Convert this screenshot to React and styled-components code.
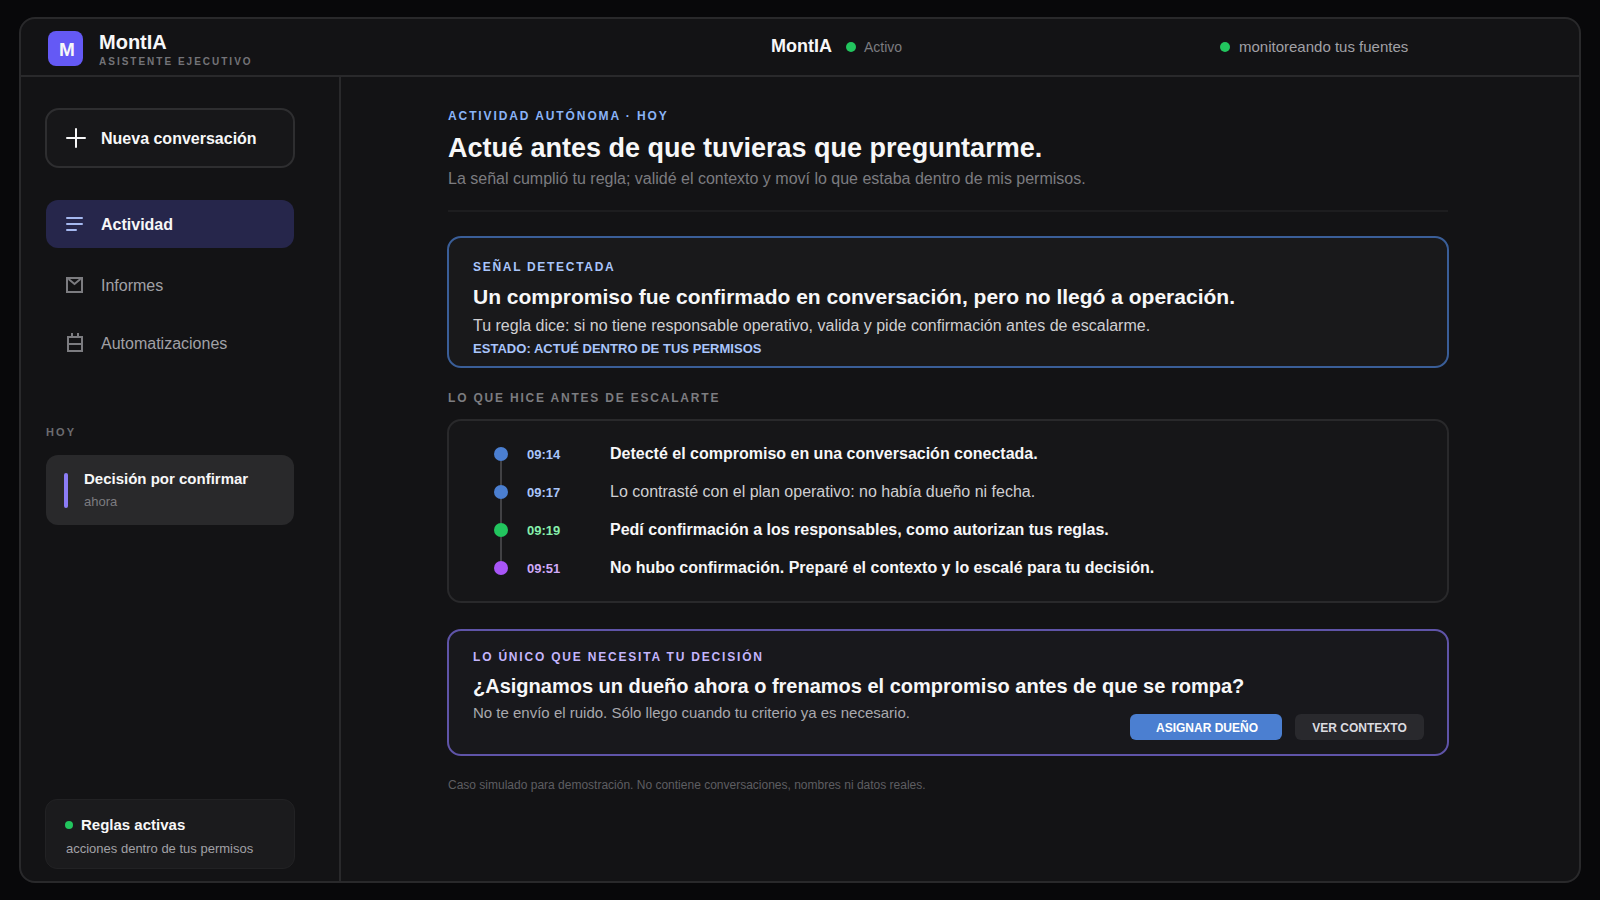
import React from 'react'
import styled, { createGlobalStyle, css } from 'styled-components'

const GlobalStyle = createGlobalStyle`
  * {
    box-sizing: border-box;
  }

  body {
    margin: 0;
    background: #08080a;
    font-family: 'Liberation Sans', Arial, sans-serif;
    color: #f7f7f8;
  }
`

const Page = styled.div`
  width: 1600px;
  height: 900px;
  padding: 17px 19px;
  overflow: hidden;
`

const Window = styled.div`
  display: flex;
  flex-direction: column;
  height: 866px;
  background: #131315;
  border: 2px solid #29292b;
  border-radius: 16px;
`

const Header = styled.header`
  display: grid;
  grid-template-columns: 722px 450px 1fr;
  height: 58px;
  padding-left: 27px;
  border-bottom: 2px solid #29292b;
`

const Brand = styled.div`
  display: flex;
  gap: 16px;
  padding-top: 12px;
`

const Logo = styled.div`
  width: 35px;
  height: 35px;
  padding-left: 3px;
  border-radius: 8px;
  background: #6459f5;
  font-size: 19px;
  font-weight: bold;
  line-height: 37px;
  text-align: center;
`

const BrandName = styled.div`
  font-size: 20px;
  font-weight: bold;
  line-height: 22px;
`

const BrandTagline = styled.div`
  margin-top: 3px;
  color: #737378;
  font-size: 10px;
  font-weight: bold;
  letter-spacing: 2px;
  line-height: 12px;
`

const HeaderStatus = styled.div`
  display: flex;
  align-items: center;
  height: 56px;
  color: ${({ $color }) => $color};
  font-size: ${({ $size }) => $size}px;
  line-height: 18px;
`

const HeaderTitle = styled.span`
  margin: 0 14px 0 1px;
  padding-bottom: 2px;
  color: #f7f7f8;
  font-size: 18px;
  font-weight: bold;
`

const Dot = styled.span`
  flex: none;
  width: ${({ $size }) => $size}px;
  height: ${({ $size }) => $size}px;
  margin-right: ${({ $gap }) => $gap || 0}px;
  border-radius: 50%;
  background: ${({ $color }) => $color || '#22c55e'};
`

const Body = styled.div`
  display: flex;
  flex: 1;
`

const Sidebar = styled.aside`
  display: flex;
  flex-direction: column;
  width: 320px;
  padding: 31px 23px 12px 24px;
  border-right: 2px solid #29292b;
`

const NewButton = styled.button`
  display: flex;
  align-items: center;
  width: 250px;
  height: 60px;
  margin-bottom: 32px;
  padding: 0 0 0 19px;
  gap: 15px;
  border: 2px solid #2e2e30;
  border-radius: 14px;
  background: #171719;
  color: #f7f7f8;
  font: bold 16px 'Liberation Sans', Arial, sans-serif;
`

const ItemText = styled.span`
  padding-top: 2px;
`

const NavItem = styled.div`
  display: flex;
  align-items: center;
  gap: 17px;
  width: 248px;
  height: 58px;
  margin-left: 1px;
  padding-left: 18px;
  color: #a1a1a6;
  font-size: 16px;

  ${({ $active }) => $active && css`
    height: 48px;
    margin-bottom: 8px;
    border-radius: 12px;
    background: #26264b;
    color: #f7f7f8;
    font-weight: bold;
  `}
`

const SidebarLabel = styled.div`
  margin: 53px 0 16px 1px;
  color: #6c6c70;
  font-size: 11px;
  font-weight: bold;
  letter-spacing: 2.1px;
  line-height: 14px;
`

const ConversationCard = styled.div`
  display: flex;
  gap: 16px;
  width: 248px;
  height: 70px;
  margin-left: 1px;
  padding: 14px 18px;
  border-radius: 12px;
  background: #29292b;
`

const Accent = styled.div`
  width: 4px;
  height: 35px;
  margin-top: 4px;
  border-radius: 2px;
  background: #8b7cf6;
`

const CardName = styled.div`
  display: flex;
  align-items: center;
  font-size: 15px;
  font-weight: bold;
  line-height: 20px;
`

const CardNote = styled.div`
  margin-top: ${({ $gap }) => $gap}px;
  padding-left: ${({ $indent }) => $indent || 0}px;
  color: ${({ $color }) => $color};
  font-size: 13px;
  line-height: 16px;
`

const RulesCard = styled.div`
  width: 250px;
  height: 70px;
  margin-top: auto;
  padding: 15px 18px 0 19px;
  border: 1px solid #222224;
  border-radius: 12px;
  background: #1b1b1d;
`

const Main = styled.main`
  width: 1108px;
  padding: 31px 0 0 106px;
`

const Label = styled.div`
  color: ${({ $color }) => $color};
  font-size: 12px;
  font-weight: bold;
  letter-spacing: ${({ $spacing }) => $spacing || 1.8}px;
  line-height: 16px;
`

const Intro = styled.section`
  margin: 0 1px;
  height: 104px;
  border-bottom: 2px solid #1d1d1f;
`

const Title = styled.h1`
  margin: 8px 0 5px;
  font-size: 27px;
  line-height: 32px;
`

const Text = styled.p`
  margin: 0;
  color: ${({ $color }) => $color};
  font-size: ${({ $size }) => $size || 16}px;
  line-height: ${({ $line }) => $line || 20}px;
`

const Panel = styled.section`
  height: ${({ $height }) => $height}px;
  margin-top: ${({ $top }) => $top}px;
  padding: ${({ $padding }) => $padding};
  border: 2px solid ${({ $border }) => $border};
  border-radius: 14px;
  background: ${({ $background }) => $background};
`

const PanelTitle = styled.h2`
  margin: ${({ $margin }) => $margin};
  font-size: ${({ $size }) => $size}px;
  line-height: ${({ $line }) => $line}px;
`

const State = styled.div`
  margin-top: 5px;
  color: #a9c5fb;
  font-size: 13px;
  font-weight: bold;
  letter-spacing: 0.03px;
  line-height: 16px;
`

const SectionLabel = styled.div`
  margin: 22px 1px -9px;
`

const Step = styled.div`
  display: grid;
  grid-template-columns: 14px 83px 1fr;
  align-items: center;
  height: 38px;
`

// the connector fills the row above each dot except the first
const Marker = styled.div`
  display: flex;
  flex-direction: column;
  align-items: center;
  height: 38px;
  margin-top: -12px;
  margin-bottom: 12px;
  justify-content: flex-end;

  &::before {
    content: '';
    width: 2px;
    height: 24px;
    background: ${({ $first }) => ($first ? 'transparent' : '#414144')};
  }
`

const StepTime = styled.span`
  padding: 2px 0 0 19px;
  color: ${({ $color }) => $color};
  font-size: 13px;
  font-weight: bold;
  line-height: 16px;
`

const StepText = styled.span`
  padding-left: 19px;
  color: ${({ $strong }) => ($strong ? '#f7f7f8' : '#cfcfd2')};
  font-size: 16px;
  font-weight: ${({ $strong }) => ($strong ? 'bold' : 'normal')};
  line-height: 20px;
`

const DecisionRow = styled.div`
  display: flex;
  justify-content: space-between;
  align-items: flex-start;
`

const Actions = styled.div`
  display: flex;
  gap: 13px;
  margin-top: 10px;
`

const ActionButton = styled.button`
  width: ${({ $width }) => $width}px;
  height: 26px;
  padding: 1px 0 0 ${({ $primary }) => ($primary ? 2 : 0)}px;
  border: 0;
  border-radius: 6px;
  background: ${({ $primary }) => ($primary ? '#4b7fd1' : '#29292d')};
  color: ${({ $primary }) => ($primary ? '#fff' : '#dcdce0')};
  font: bold 12px 'Liberation Sans', Arial, sans-serif;
`

const Disclaimer = styled.p`
  margin: 21px 1px 0;
  color: #5e5e62;
  font-size: 12px;
  line-height: 16px;
`

const PlusIcon = () => (
  <svg width="20" height="20" viewBox="0 0 20 20" stroke="#f7f7f8" strokeWidth="2" strokeLinecap="round">
    <path d="M1 10H19M10 1V19" />
  </svg>
)

const ActivityIcon = () => (
  <svg width="20" height="20" viewBox="0 0 20 20" stroke="#a5b8f0" strokeWidth="2" strokeLinecap="round">
    <path d="M3 4H18M3 10H18M3 16H12" />
  </svg>
)

const ReportsIcon = () => (
  <svg width="20" height="20" viewBox="0 0 20 20" fill="none" stroke="#7c7c80" strokeWidth="2">
    <path d="M3 3H18V17H3ZM4.500 4L10.500 9L16.500 4" />
  </svg>
)

const AutomationsIcon = () => (
  <svg width="20" height="20" viewBox="0 0 20 20" fill="none" stroke="#7c7c80" strokeWidth="2">
    <path d="M4 4H18V18H4ZM4 11H18M8 4V0M14 4V0" />
  </svg>
)

const steps = [
  { time: '09:14', text: 'Detecté el compromiso en una conversación conectada.', dot: '#4b7fd1', color: '#a9c5fb', strong: true },
  { time: '09:17', text: 'Lo contrasté con el plan operativo: no había dueño ni fecha.', dot: '#4b7fd1', color: '#a9c5fb' },
  { time: '09:19', text: 'Pedí confirmación a los responsables, como autorizan tus reglas.', dot: '#22c55e', color: '#86efac', strong: true },
  { time: '09:51', text: 'No hubo confirmación. Preparé el contexto y lo escalé para tu decisión.', dot: '#a855f7', color: '#d0aaf8', strong: true },
]

const TopBar = () => (
  <Header>
    <Brand>
      <Logo>M</Logo>
      <div>
        <BrandName>MontIA</BrandName>
        <BrandTagline>ASISTENTE EJECUTIVO</BrandTagline>
      </div>
    </Brand>
    <HeaderStatus $size={14} $color="#7c7c80">
      <HeaderTitle>MontIA</HeaderTitle>
      <Dot $size={10} $gap={8} />
      Activo
    </HeaderStatus>
    <HeaderStatus $size={15} $color="#a1a1a6">
      <Dot $size={10} $gap={9} />
      monitoreando tus fuentes
    </HeaderStatus>
  </Header>
)

const Navigation = () => (
  <Sidebar>
    <NewButton>
      <PlusIcon />
      <ItemText>Nueva conversación</ItemText>
    </NewButton>
    <NavItem $active>
      <ActivityIcon />
      <ItemText>Actividad</ItemText>
    </NavItem>
    <NavItem>
      <ReportsIcon />
      <ItemText>Informes</ItemText>
    </NavItem>
    <NavItem>
      <AutomationsIcon />
      <ItemText>Automatizaciones</ItemText>
    </NavItem>
    <SidebarLabel>HOY</SidebarLabel>
    <ConversationCard>
      <Accent />
      <div>
        <CardName>Decisión por confirmar</CardName>
        <CardNote $gap={5} $color="#7c7c80">ahora</CardNote>
      </div>
    </ConversationCard>
    <RulesCard>
      <CardName>
        <Dot $size={8} $gap={8} />
        Reglas activas
      </CardName>
      <CardNote $gap={6} $indent={1} $color="#a1a1a6">acciones dentro de tus permisos</CardNote>
    </RulesCard>
  </Sidebar>
)

export default class App extends React.Component {
  render() {
    return (
      <Page>
        <GlobalStyle />
        <Window>
          <TopBar />
          <Body>
            <Navigation />
            <Main>
              <Intro>
                <Label $color="#8ab4f8" $spacing={1.9}>ACTIVIDAD AUTÓNOMA · HOY</Label>
                <Title>Actué antes de que tuvieras que preguntarme.</Title>
                <Text $color="#7c7c80">
                  La señal cumplió tu regla; validé el contexto y moví lo que estaba dentro de mis permisos.
                </Text>
              </Intro>

              <Panel $height={132} $top={24} $padding="21px 24px 0" $border="#3a5e98" $background="#19191b">
                <Label $color="#a9c5fb" $spacing={1.7}>SEÑAL DETECTADA</Label>
                <PanelTitle $size={21} $line={26} $margin="9px 0 6px">
                  Un compromiso fue confirmado en conversación, pero no llegó a operación.
                </PanelTitle>
                <Text $color="#cfcfd2">
                  Tu regla dice: si no tiene responsable operativo, valida y pide confirmación antes de escalarme.
                </Text>
                <State>ESTADO: ACTUÉ DENTRO DE TUS PERMISOS</State>
              </Panel>

              <SectionLabel>
                <Label $color="#7c7c80">LO QUE HICE ANTES DE ESCALARTE</Label>
              </SectionLabel>

              <Panel $height={184} $top={22} $padding="14px 45px" $border="#29292b" $background="#161618">
                {steps.map((step, i) => (
                  <Step key={step.time}>
                    <Marker $first={i === 0}>
                      <Dot $size={14} $color={step.dot} />
                    </Marker>
                    <StepTime $color={step.color}>{step.time}</StepTime>
                    <StepText $strong={step.strong}>{step.text}</StepText>
                  </Step>
                ))}
              </Panel>

              <Panel $height={127} $top={26} $padding="18px 23px 0 24px" $border="#5f54a8" $background="#18181c">
                <Label $color="#c4b5fd">LO ÚNICO QUE NECESITA TU DECISIÓN</Label>
                <PanelTitle $size={20} $line={24} $margin="9px 0 6px">
                  ¿Asignamos un dueño ahora o frenamos el compromiso antes de que se rompa?
                </PanelTitle>
                <DecisionRow>
                  <Text $color="#a9a9ae" $size={15} $line={18}>
                    No te envío el ruido. Sólo llego cuando tu criterio ya es necesario.
                  </Text>
                  <Actions>
                    <ActionButton $primary $width={152}>ASIGNAR DUEÑO</ActionButton>
                    <ActionButton $width={129}>VER CONTEXTO</ActionButton>
                  </Actions>
                </DecisionRow>
              </Panel>

              <Disclaimer>
                Caso simulado para demostración. No contiene conversaciones, nombres ni datos reales.
              </Disclaimer>
            </Main>
          </Body>
        </Window>
      </Page>
    )
  }
}
